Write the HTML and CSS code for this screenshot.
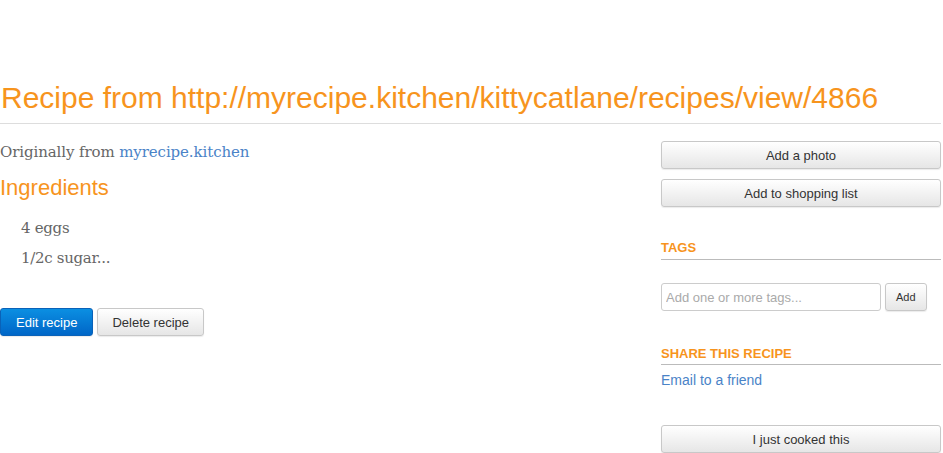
FILE: index.html
```html
<!DOCTYPE html>
<html>
<head>
<meta charset="utf-8">
<link rel="stylesheet" href="styles.css">
</head>
<body>
<div class="page">
  <h1 class="title">Recipe from http://myrecipe.kitchen/kittycatlane/recipes/view/4866</h1>
  <div class="layout">
    <div class="main">
      <p class="source">Originally from <a class="link-serif" href="#">myrecipe.kitchen</a></p>
      <h2 class="section-title">Ingredients</h2>
      <ul class="ingredients">
        <li>4 eggs</li>
        <li>1/2c sugar...</li>
      </ul>
      <div class="actions">
        <button class="btn btn-primary">Edit recipe</button>
        <button class="btn">Delete recipe</button>
      </div>
    </div>
    <aside class="sidebar">
      <button class="btn btn-block">Add a photo</button>
      <button class="btn btn-block btn-gap">Add to shopping list</button>
      <h3 class="side-heading tags-heading">TAGS</h3>
      <div class="tag-form">
        <input class="tag-input" type="text" placeholder="Add one or more tags...">
        <button class="btn btn-small">Add</button>
      </div>
      <h3 class="side-heading share-heading">SHARE THIS RECIPE</h3>
      <a class="link" href="#">Email to a friend</a>
      <button class="btn btn-block cooked">I just cooked this</button>
    </aside>
  </div>
</div>
</body>
</html>
```
FILE: styles.css
```css
html, body {
  margin: 0;
  padding: 0;
  background: #fff;
}
.page {
  width: 941px;
  padding-top: 80px;
  font-family: "Liberation Sans", Arial, sans-serif;
}
.title {
  margin: 0;
  font-size: 30px;
  font-weight: normal;
  line-height: 36px;
  color: #f7941d;
  padding: 0 0 7px 1px;
  border-bottom: 1px solid #dddddd;
}
.layout {
  display: flex;
  gap: 20px;
}
.main {
  flex: 1;
}
.source {
  margin: 18px 0 0 0;
  font-family: "DejaVu Serif", "Liberation Serif", serif;
  font-size: 15px;
  line-height: 20px;
  color: #666;
  letter-spacing: -0.1px;
}
.link-serif {
  color: #4a83c7;
  text-decoration: none;
}
.section-title {
  margin: 13px 0 0 0;
  font-size: 22px;
  font-weight: normal;
  line-height: 26px;
  color: #f7941d;
}
.ingredients {
  list-style: none;
  margin: 12px 0 0 0;
  padding: 0 0 0 21px;
  font-family: "DejaVu Serif", "Liberation Serif", serif;
  font-size: 15px;
  letter-spacing: -0.3px;
  color: #666;
}
.ingredients li {
  line-height: 30px;
}
.actions {
  display: flex;
  gap: 4px;
  margin-top: 35px;
}
.btn {
  font-family: "Liberation Sans", Arial, sans-serif;
  font-size: 13px;
  color: #333;
  height: 28px;
  padding: 0 14px;
  border: 1px solid #c8c8c8;
  border-radius: 3px;
  background: linear-gradient(#ffffff, #e6e6e6);
  box-shadow: 0 1px 1px rgba(0,0,0,0.08);
  cursor: pointer;
}
.btn-primary {
  color: #fff;
  border-color: #0a62b8;
  background: linear-gradient(#0b8fe2, #0066c7);
  padding: 0 15px;
}
.sidebar {
  width: 280px;
  display: flex;
  flex-direction: column;
  padding-top: 17px;
}
.btn-block {
  width: 100%;
  height: 28px;
}
.btn-gap {
  margin-top: 10px;
}
.side-heading {
  margin: 0;
  font-size: 13px;
  font-weight: bold;
  color: #f7941d;
  line-height: 16px;
  padding-bottom: 4px;
  border-bottom: 1px solid #bbbbbb;
}
.tags-heading {
  margin-top: 33px;
  padding-bottom: 3px;
}
.tag-form {
  display: flex;
  align-items: center;
  gap: 4px;
  margin-top: 23px;
}
.tag-input {
  width: 220px;
  height: 28px;
  box-sizing: border-box;
  border: 1px solid #cccccc;
  border-radius: 3px;
  padding: 0 4px;
  font-family: "Liberation Sans", Arial, sans-serif;
  font-size: 13px;
  color: #333;
}
.tag-input::placeholder {
  color: #aaa;
}
.btn-small {
  font-size: 11px;
  padding: 0 10px;
  height: 28px;
}
.share-heading {
  margin-top: 35px;
  padding-bottom: 2px;
}
.link {
  margin-top: 6px;
  font-size: 14px;
  line-height: 18px;
  color: #4a83c7;
  text-decoration: none;
  align-self: flex-start;
}
.cooked {
  margin-top: 36px;
}
```
